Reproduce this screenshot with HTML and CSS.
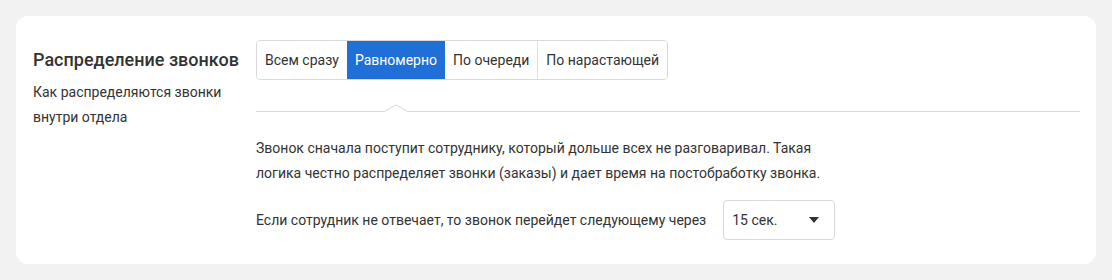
FILE: index.html
```html
<!DOCTYPE html>
<html lang="ru">
<head>
  <meta charset="UTF-8" />
  <title>Распределение звонков</title>
  <link rel="stylesheet" href="styles.css">
</head>
<body>
  <div class="card">
    <div class="side">
      <h2>Распределение звонков</h2>
      <p class="hint">Как распределяются звонки внутри отдела</p>
    </div>

    <div class="main">
      <div class="tabs">
        <button class="tab">Всем сразу</button>
        <button class="tab active">Равномерно</button>
        <button class="tab">По очереди</button>
        <button class="tab">По нарастающей</button>
      </div>

      <div class="divider">
        <svg class="notch" width="24" height="8" viewBox="0 0 24 8">
          <polygon points="0,8 12,0.8 24,8" fill="#fff" />
          <polyline points="0,7.5 12,0.8 24,7.5" fill="none" stroke="#dadada" stroke-width="1" />
        </svg>
      </div>

      <p class="text">Звонок сначала поступит сотруднику, который дольше всех не разговаривал. Такая логика честно распределяет звонки (заказы) и дает время на постобработку звонка.</p>

      <div class="row">
        <span>Если сотрудник не отвечает, то звонок перейдет следующему через</span>
        <div class="select">
          <span>15 сек.</span>
          <span class="caret"></span>
        </div>
      </div>
    </div>
  </div>
</body>
</html>
```

FILE: styles.css
```css
body {
  margin: 0;
  padding: 16px;
  background: #f1f2f1;
  font-family: Roboto, "Liberation Sans", Arial, sans-serif;
  color: #333;
}
.card {
  display: flex;
  background: white;
  border-radius: 12px;
  padding: 24px 16px 24px 17px;
}
.side {
  width: 223px;
  flex-shrink: 0;
}
h2 {
  margin: 0;
  font-size: 18px;
  font-weight: 500;
  line-height: 40px;
  color: #333;
}
.hint {
  margin: 0;
  width: 200px;
  font-size: 14px;
  line-height: 25px;
}
.main {
  flex: 1;
}
.tabs {
  display: inline-flex;
  border: 1px solid #d9d9d9;
  border-radius: 4px;
  overflow: hidden;
}
.tab {
  font-family: inherit;
  font-size: 14px;
  color: #333;
  background: white;
  border: none;
  border-left: 1px solid #e0e0e0;
  height: 38px;
  padding: 0 8px;
  cursor: pointer;
}
.tab:first-child {
  border-left: none;
}
.tab.active {
  background: #1f6fd6;
  color: white;
  border-left: none;
}
.tab.active + .tab {
  border-left: none;
}
.divider {
  position: relative;
  height: 1px;
  background: #dadada;
  margin-top: 31px;
}
.notch {
  position: absolute;
  left: 128px;
  bottom: 0;
  display: block;
}
.text {
  width: 570px;
  margin: 24px 0 0;
  font-size: 14px;
  line-height: 25px;
}
.row {
  display: flex;
  align-items: center;
  gap: 17px;
  margin-top: 14px;
  font-size: 14px;
}
.select {
  display: flex;
  align-items: center;
  justify-content: space-between;
  box-sizing: border-box;
  width: 112px;
  height: 40px;
  padding: 0 15px 0 8px;
  border: 1px solid #d9d9d9;
  border-radius: 4px;
}
.caret {
  width: 0;
  height: 0;
  border-left: 5px solid transparent;
  border-right: 5px solid transparent;
  border-top: 6px solid #333;
}
```
